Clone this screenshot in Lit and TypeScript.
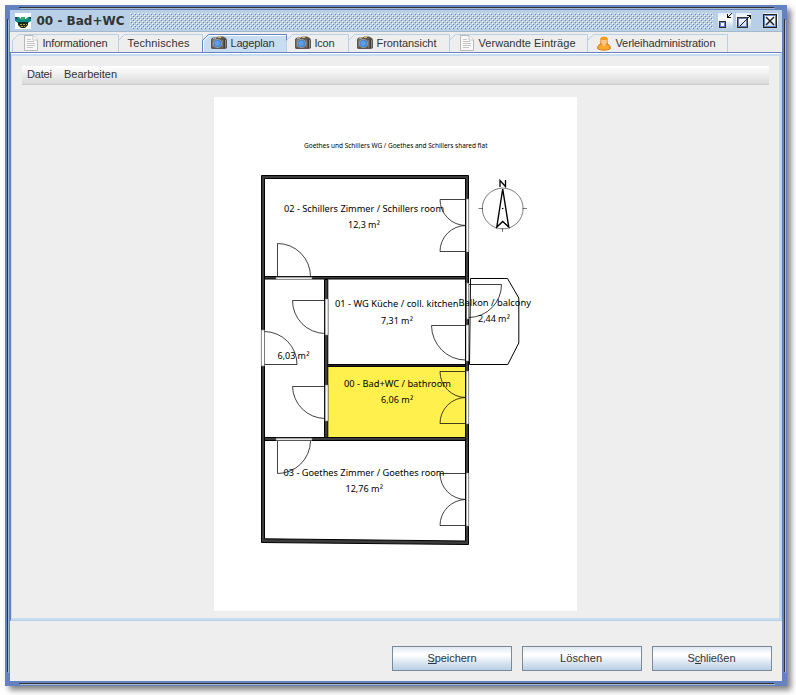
import { LitElement, html, svg, css, nothing } from "lit";
import { customElement } from "lit/decorators.js";

type IconName = "doc" | "camera" | "person";
interface Tab { label: string; width: number; pad: number; text: number; icon?: IconName; active?: boolean }

const TABS: Tab[] = [
  { label: "Informationen", width: 106, pad: 11, text: 65, icon: "doc" },
  { label: "Technisches", width: 84, pad: 9, text: 62 },
  { label: "Lageplan", width: 84, pad: 9, text: 44, icon: "camera", active: true },
  { label: "Icon", width: 62, pad: 9, text: 20, icon: "camera" },
  { label: "Frontansicht", width: 101, pad: 9, text: 60, icon: "camera" },
  { label: "Verwandte Einträge", width: 138, pad: 10, text: 97, icon: "doc" },
  { label: "Verleihadministration", width: 140, pad: 9, text: 100, icon: "person" },
];

const ICONS = {
  doc: svg`<path d="M1.500 .5H10L14.500 5V15.500H1.500Z" fill="#f8f8f8" stroke="#b9b9b9"/>
    <path d="M10 .5V5H14.500" fill="#fff" stroke="#c4c4c4"/>
    <path d="M4 4.500H8M4 6.500H11M4 8.500H12M4 10.500H12M4 12.500H10" stroke="#c6c6c6"/>`,
  camera: svg`<path d="M0 4L2 2.500H6L7 1.500H12L15 3L16 5V13L14 14H1L0 13Z" fill="#5c5954"/>
    <path d="M1 4H6V12H1Z" fill="#77736b"/><path d="M7 1.500H10V3H7Z" fill="#e2ba58"/>
    <path d="M2 3.500H5" stroke="#aaa69b"/>
    <circle cx="6.500" cy="8.500" r="4.600" fill="#a39f96"/><circle cx="6.500" cy="8.500" r="3.800" fill="#4485cf"/>
    <circle cx="6.200" cy="8.300" r="2.600" fill="#5f9ee4"/>
    <path d="M11.800 5V12.500M14.500 5V12.500" stroke="#8d8a83"/><path d="M13.200 4V13" stroke="#34322f"/>`,
  person: svg`<path d="M1.500 13.500C1.500 10.500 3.500 9 6 8.500H10C13 9 14.500 11 14.500 13.500C12 15.700 4 15.700 1.500 13.500Z" fill="#f9a72c" stroke="#d98014"/>
    <path d="M4 10L4.500 3.500C5 1 11 1 11.500 3.500L12 10Z" fill="#ef8a14"/>
    <ellipse cx="8" cy="6.500" rx="2.900" ry="3.300" fill="#fbc58c"/>
    <path d="M4.500 4C5 1 11 1 11.500 4L11 5H5Z" fill="#f79a17"/>
    <path d="M5.500 9.500L8 11.500L10.500 9.500" fill="#fbd08c"/>`,
};

const UI = css`
  text { font-family: "Liberation Sans", Arial, sans-serif; font-size: 11px; fill: #333; }
`;

@customElement("tab-strip")
class TabStrip extends LitElement {
  static styles = [UI, css`
    :host { display: flex; height: 19px; padding: 2px 0 0 2px; }
    .tab { display: block; flex: none; overflow: visible; }
    .edge { fill: none; stroke: #b8cfe5; }
    .active .edge { stroke: #6382bf; }
    .fill { fill: #c8ddf2; }
    .shine { fill: none; stroke: #fff; }
  `];
  render() {
    return TABS.map((t) => {
      const x = t.icon ? t.pad + 19.5 : t.pad + 0.5;
      return html`<svg class="tab ${t.active ? "active" : ""}" width=${t.width} height="19">
        ${t.active ? svg`<path class="fill" d="M1 20V6.500L6.500 1H${t.width}V20Z"/>
          <path class="shine" d="M1.500 19V7L7 1.500H${t.width}"/>` : nothing}
        <path class="edge" d="M.5 ${t.active ? 19 : 18}V6.500L6.500 .5H${t.width + 0.5}V${t.active ? 19 : 18}"/>
        ${t.icon ? svg`<g transform="translate(${t.pad} 1)">${ICONS[t.icon]}</g>` : nothing}
        <text x=${x} y="13" textLength=${t.text} lengthAdjust="spacing">${t.label}</text>
      </svg>`;
    });
  }
}

interface Label { text: string; x: number; y: number; width: number; small?: boolean; area?: boolean }
const LABELS: Label[] = [
  { text: "Goethes und Schillers WG / Goethes and Schillers shared flat", x: 304, y: 148, width: 183.5, small: true },
  { text: "02 - Schillers Zimmer / Schillers room", x: 284, y: 212, width: 160 },
  { text: "12,3 m", x: 348, y: 228, width: 28.5, area: true },
  { text: "01 - WG Küche / coll. kitchen", x: 335, y: 307, width: 123.5 },
  { text: "7,31 m", x: 381, y: 323.5, width: 28.5, area: true },
  { text: "Balkon / balcony", x: 458.5, y: 306, width: 72.5 },
  { text: "2,44 m", x: 478, y: 322, width: 28.5, area: true },
  { text: "6,03 m", x: 277.5, y: 358.5, width: 28.5, area: true },
  { text: "00 - Bad+WC / bathroom", x: 344, y: 386.5, width: 107 },
  { text: "6,06 m", x: 381, y: 403, width: 28.8, area: true },
  { text: "03 - Goethes Zimmer / Goethes room", x: 283.5, y: 475.5, width: 161 },
  { text: "12,76 m", x: 345.5, y: 492, width: 34, area: true },
];

@customElement("floor-plan")
class FloorPlan extends LitElement {
  static styles = css`
    :host { display: block; width: 363px; height: 514px; background: #fff; }
    svg { display: block; }
    .wall { fill: #3c3c3c; stroke: #000; }
    .solid { fill: #222; stroke: #000; }
    .open { fill: #fff; stroke: #777; stroke-width: .6; }
    .thin { fill: none; stroke: #111; stroke-width: .8; }
    .dial { fill: none; stroke: #222; stroke-width: .6; }
    .balcony { fill: none; stroke: #000; stroke-width: 1; }
    .needle { fill: none; stroke: #000; stroke-width: 1.4; }
    text { font-family: "Noto Sans", "Open Sans", sans-serif; font-size: 9.3px; fill: #000; }
    .small { font-size: 6.6px; }
  `;
  private windowPair(y: number) {
    return svg`<path class="open" d="M466 ${y - 0.5}H468.700V${y + 52.5}H466Z"/>
      <path d="M465.700 ${y - 0.5}V${y + 52.5}" stroke="#000"/>
      <path class="thin" d="M466 ${y}H440A26 26 0 0 0 466 ${y + 26}A26 26 0 0 0 440 ${y + 52}H466"/>`;
  }
  render() {
    return html`<svg width="363" height="514" viewBox="214 97 363 514">
      <path d="M328 367H466V438H328Z" fill="#fff04d"/>
      <path class="wall" fill-rule="evenodd" d="M261.500 175.500H468.500V544.500L261.500 542.500ZM264.500 178.500V538.800L465.500 541V178.500Z"/>
      <path class="wall" d="M264.500 276.500H465.500V279H264.500Z"/>
      <path class="wall" d="M324.500 279.500H327.800V437.500H324.500Z"/>
      <path class="solid" d="M328 364.500H465.500V366.500H328Z"/>
      <path class="wall" d="M264.500 437.500H465.500V440.500H264.500Z"/>
      <path class="open" d="M276 277.200H312V279.200H276Z"/>
      <path class="open" d="M276 438.200H312V440.200H276Z"/>
      <path class="thin" d="M277.500 276.500V243.500A33 33 0 0 1 310.500 276.500"/>
      <path class="thin" d="M277.500 441V473.500A33 33 0 0 0 310.500 441"/>
      <path class="open" d="M325.200 299H328V335H325.200ZM325.200 385H328V421H325.200ZM261.300 330H264.500V366H261.300Z"/>
      <path class="thin" d="M325 300.500H292.500A33 33 0 0 0 325 333.500M325 386.500H292.500A33 33 0 0 0 325 418.500"/>
      <path class="thin" d="M264.500 331.500A33 33 0 0 1 297 364.500H264.500"/>
      <path class="open" d="M466 283H468.700V319H466ZM466 325H468.700V361H466Z"/>
      <path d="M465.500 325V361M466 283V319" stroke="#000"/>
      <path class="thin" d="M465.500 325.500H431.500A34 35 0 0 0 465.500 360"/>
      <path class="thin" d="M469 284.500H501.500A33 33 0 0 1 469 317.500"/>
      <path class="balcony" d="M470.500 278.500H507.500L518.800 298V343L507.800 364.500H469.500L470.500 278.500"/>
      ${[199.5, 371.5, 473.5].map((y) => this.windowPair(y))}
      <circle class="dial" cx="502.700" cy="208.500" r="20.400"/>
      <path class="dial" d="M478.500 208.500H483M522.500 208.500H527M502.500 228V232"/>
      <path class="needle" d="M502.700 189L496.800 227L502.700 221.500L508.700 227Z"/>
      <circle cx="502.700" cy="208.500" r=".8"/>
      <path d="M500 187V180.500L505.500 186.500V180" fill="none" stroke="#000" stroke-width="1.300"/>
      ${LABELS.map((l) => svg`<text class=${l.small ? "small" : ""} x=${l.x} y=${l.y}
        textLength=${l.width} lengthAdjust="spacingAndGlyphs">${l.text}</text>
        ${l.area ? svg`<text x=${l.x + l.width + 0.3} y=${l.y + 1}>²</text>` : nothing}`)}
    </svg>`;
  }
}

@customElement("title-bar")
class TitleBar extends LitElement {
  static styles = css`
    :host { display: flex; align-items: center; box-sizing: border-box; height: 22px; padding: 0 5px;
      background: #b8cfe5; border-bottom: 1px solid #a3b8cc; }
    svg { display: block; flex: none; }
    .title { font: bold 12px "DejaVu Sans", sans-serif; fill: #333; }
    .bumps { flex: 1; height: 16px; margin-right: 5px; }
    .buttons { margin-right: -1px; }
  `;
  render() {
    return html`
      <svg width="16" height="16">
        <path fill="#fff" d="M0 0H16V16H0Z"/>
        <path fill="#0c8a86" d="M0 4H4L6 6H11L13 4H16V8L13 10H3L0 8Z"/>
        <path fill="#31343c" d="M0 4H2V6H1ZM14 4H16V6H15Z"/>
        <path fill="#3aa66a" d="M6 4H10V7H6Z"/>
        <path fill="#172c18" d="M3 9H13V12L10 15H6L3 12Z"/>
        <path stroke="#c4a52f" stroke-dasharray="2 1" d="M5 11.500H12M6 13.500H10"/>
      </svg>
      <svg width="99" height="21"><text class="title" x="5.500" y="14.500" textLength="88" lengthAdjust="spacing">00 - Bad+WC</text></svg>
      <svg class="bumps">
        <defs><pattern id="b" width="4" height="4" patternUnits="userSpaceOnUse" shape-rendering="crispEdges">
          <path fill="#fff" d="M0 0h1v1h-1zM2 2h1v1h-1z"/><path fill="#6382bf" d="M1 1h1v1h-1zM3 3h1v1h-1z"/>
        </pattern></defs>
        <rect width="100%" height="16" fill="url(#b)"/>
      </svg>
      <svg class="buttons" width="60" height="16" shape-rendering="crispEdges">
        <defs><linearGradient id="g" x2="0" y2="1"><stop stop-color="#e3edf7"/><stop offset=".35" stop-color="#fff"/><stop offset="1" stop-color="#b8cfe5"/></linearGradient></defs>
        <path fill="url(#g)" d="M0 0H15V16H0ZM18 0H33V16H18ZM45 0H60V16H45Z"/>
        <path fill="#fff" stroke="#333" d="M1.500 8.500H7.500V14.500H1.500Z"/><path fill="none" stroke="#6382bf" d="M2.500 9.500H6.500V13.500H2.500Z"/>
        <path fill="#111" d="M9 1h1v4h-1zM9 4h4v1h-4zM10 3h1v1h-1zM11 2h1v1h-1zM12 1h1v1h-1zM13 0h1v1h-1z"/>
        <path fill="none" stroke="#333" d="M19.500 4.500H29.500V14.500H19.500Z"/><path fill="none" stroke="#6382bf" d="M20.500 5.500H28.500V13.500H20.500Z"/>
        <path fill="#111" d="M29 2h4v1h-4zM32 2h1v4h-1zM31 3h1v1h-1zM30 4h1v1h-1zM29 5h1v1h-1zM28 6h1v1h-1zM27 7h1v1h-1zM26 8h1v1h-1zM25 9h1v1h-1zM24 10h1v1h-1zM23 11h1v1h-1zM22 12h1v1h-1z"/>
        <path fill="none" stroke="#222" d="M45.500 1.500H58.500V14.500H45.500Z"/><path fill="none" stroke="#6382bf" d="M46.500 2.500H57.500V13.500H46.500Z"/>
        <path shape-rendering="auto" stroke="#222" stroke-width="1.500" d="M48 4L56 12M56 4L48 12"/>
      </svg>`;
  }
}

@customElement("app-root")
class AppRoot extends LitElement {
  static styles = [UI, css`
    :host { display: block; box-sizing: border-box; width: 796px; height: 695px; padding: 5px; background: #fff; overflow: hidden; }
    .frame { display: flex; flex-direction: column; box-sizing: border-box; width: 782px; height: 681px; padding: 5px;
      box-shadow: 4px 4px 6px rgba(0, 0, 0, .5);
      background:
        linear-gradient(#333, #333) 14px 2px / 755px 1px,
        linear-gradient(#a3b8cc, #a3b8cc) 15px 3px / 755px 1px,
        linear-gradient(#333, #333) 2px 14px / 1px 653px,
        linear-gradient(#a3b8cc, #a3b8cc) 3px 15px / 1px 653px,
        linear-gradient(#333, #333) 779px 14px / 1px 653px,
        linear-gradient(#a3b8cc, #a3b8cc) 780px 15px / 1px 653px,
        linear-gradient(#333, #333) 14px 678px / 755px 1px,
        linear-gradient(#a3b8cc, #a3b8cc) 15px 679px / 755px 1px,
        #6382bf;
      background-repeat: no-repeat; }
    .body { flex: 1; display: flex; flex-direction: column; background: #eee; }
    tab-strip { flex: none; margin-bottom: -1px; }
    .pane { box-sizing: border-box; height: 569px; border: 1px solid #b8cfe5; border-left-color: #6382bf; border-top-color: #6382bf; }
    .rim { box-sizing: border-box; height: 567px; border: 2px solid #c8ddf2; border-left-width: 1px; border-top: 1px solid #fff; }
    .inner { box-sizing: border-box; height: 564px; border-top: 2px solid #c8ddf2; padding: 10px 10px 0; display: flex; flex-direction: column; }
    .menu { height: 18px; border-bottom: 1px solid #ccc; background: linear-gradient(#fff, #dadada); }
    floor-plan { margin: 12px 0 0 192px; }
    .actions { display: flex; justify-content: flex-end; gap: 10px; padding: 25px 10px 0 0; }
    .button { box-sizing: border-box; width: 120px; height: 25px; border: 1px solid #7a8a99;
      background: linear-gradient(#dde8f3, #fff 30%, #fff 36%, #dce7f2 66%, #b8cfe5); }
    svg { display: block; }
    .key { stroke: #333; }
  `];
  render() {
    const buttons = [
      { label: "Speichern", x: 34.5, w: 49, k: [35, 43] },
      { label: "Löschen", x: 37, w: 42, k: null },
      { label: "Schließen", x: 34.5, w: 48, k: [42, 48] },
    ];
    return html`<div class="frame">
      <title-bar></title-bar>
      <div class="body">
        <tab-strip></tab-strip>
        <div class="pane"><div class="rim"><div class="inner">
          <div class="menu"><svg width="747" height="18">
            <text x="5" y="12" textLength="25" lengthAdjust="spacing">Datei</text>
            <text x="42" y="12" textLength="53" lengthAdjust="spacing">Bearbeiten</text>
          </svg></div>
          <floor-plan></floor-plan>
        </div></div></div>
        <div class="actions">${buttons.map((b) => html`<div class="button"><svg width="118" height="23">
          <text x=${b.x} y="15" textLength=${b.w} lengthAdjust="spacing">${b.label}</text>
          ${b.k ? svg`<path class="key" d="M${b.k[0]} 16.500H${b.k[1]}"/>` : nothing}
        </svg></div>`)}</div>
      </div>
    </div>`;
  }
}
